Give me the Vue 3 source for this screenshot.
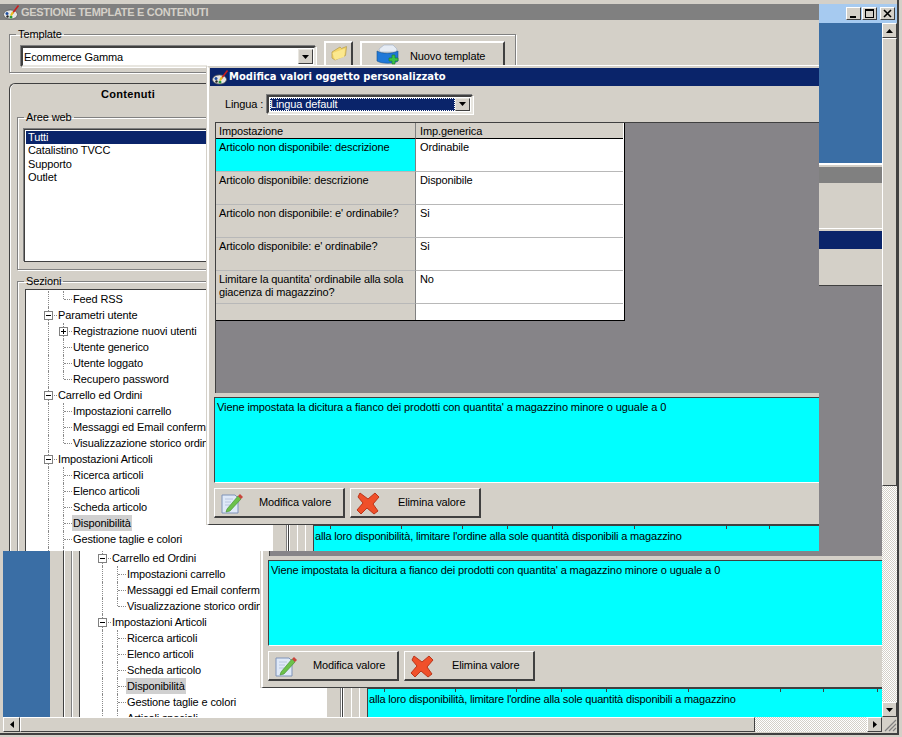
<script setup>
const scenes = [
  { id: 'ghost', x: 47, y: 163 },
  { id: 'top', x: -4, y: 0 }
]
const areas = ['Tutti', 'Catalistino TVCC', 'Supporto', 'Outlet']
const tree = [
  { t: 'Feed RSS', l: 3, last: true },
  { t: 'Parametri utente', l: 2, box: '-' },
  { t: 'Registrazione nuovi utenti', l: 3, box: '+' },
  { t: 'Utente generico', l: 3 },
  { t: 'Utente loggato', l: 3 },
  { t: 'Recupero password', l: 3, last: true },
  { t: 'Carrello ed Ordini', l: 2, box: '-' },
  { t: 'Impostazioni carrello', l: 3 },
  { t: 'Messaggi ed Email conferma ordine', l: 3 },
  { t: 'Visualizzazione storico ordini', l: 3, last: true },
  { t: 'Impostazioni Articoli', l: 2, box: '-' },
  { t: 'Ricerca articoli', l: 3 },
  { t: 'Elenco articoli', l: 3 },
  { t: 'Scheda articolo', l: 3 },
  { t: 'Disponibilità', l: 3, sel: true },
  { t: 'Gestione taglie e colori', l: 3 },
  { t: 'Articoli speciali', l: 3 }
]
const rows = [
  { a: 'Articolo non disponibile: descrizione', b: 'Ordinabile', sel: true },
  { a: 'Articolo disponibile: descrizione', b: 'Disponibile' },
  { a: 'Articolo non disponibile: e\' ordinabile?', b: 'Si' },
  { a: 'Articolo disponibile: e\' ordinabile?', b: 'Si' },
  { a: 'Limitare la quantita\' ordinabile alla sola giacenza di magazzino?', b: 'No' },
  { a: '', b: '', short: true }
]
const ticks = [16, 87, 148, 193, 238, 320, 412, 455, 509]
const memo = "Viene impostata la dicitura a fianco dei prodotti con quantita' a magazzino minore o uguale a 0"
const strip = "alla loro disponibilità, limitare l'ordine alla sole quantità disponibili a magazzino"
</script>

<template>
  <div class="app">
    <div class="capbar">
      <div class="capbtns">
        <span class="capbtn"><i class="min"></i></span>
        <span class="capbtn"><i class="max"></i></span>
        <span class="capbtn close">
          <svg width="9" height="9" viewBox="0 0 9 9"><path d="M1 1l7 7M8 1l-7 7" stroke="#000" stroke-width="1.6" fill="none"/></svg>
        </span>
      </div>
    </div>

    <div class="middle">
      <div class="viewport">
        <template v-for="s in scenes" :key="s.id">
          <div :class="s.id === 'top' ? 'clip-top' : 'clip-ghost'">
            <div class="scene" :style="{ left: s.x + 'px', top: s.y + 'px' }">
              <div class="wintitle">
                <svg class="appicon" width="17" height="15" viewBox="0 0 17 15">
                  <ellipse cx="7.5" cy="9.5" rx="7" ry="4.6" fill="#e6e6e6" stroke="#5a5a5a" stroke-width=".8"/>
                  <circle cx="4" cy="8.5" r="1.5" fill="#1f4fa0"/><circle cx="8" cy="12" r="1.5" fill="#2f9a3a"/><circle cx="4.5" cy="11.5" r="1.2" fill="#222"/>
                  <path d="M15.5.5L9 9" stroke="#c81e1e" stroke-width="1.6"/><path d="M10 7l-2 3.5" stroke="#e8c020" stroke-width="2"/>
                </svg>
                <span>GESTIONE TEMPLATE E CONTENUTI</span>
              </div>

              <fieldset class="group tplgroup">
                <legend>Template</legend>
                <div class="tplrow">
                  <div class="combo tplcombo">
                    <span class="combotext">Ecommerce Gamma</span>
                    <span class="arrowbtn"><svg width="7" height="4" viewBox="0 0 7 4"><path d="M0 0h7L3.5 4z"/></svg></span>
                  </div>
                  <div class="tbtn folderbtn">
                    <svg width="18" height="16" viewBox="0 0 18 16">
                      <path d="M2 7l8-5 1.500 1.500 5-2-1 9L5 15 2 13z" fill="#f5d76a" stroke="#b9a050" stroke-width=".8"/>
                      <path d="M2.500 8L14 4l1 .5-1 7.500-9 3z" fill="#fbe88e"/>
                    </svg>
                  </div>
                  <div class="tbtn newbtn">
                    <svg width="25" height="23" viewBox="0 0 25 23">
                      <path d="M4 6l5-4 9 0 4 4-1 3H5z" fill="#e6ecf4" stroke="#9fb0c8" stroke-width=".6"/>
                      <path d="M2 8c5 3 15 3 21 0v10c-4 3-16 3-21 0z" fill="#1f78d8" stroke="#14508f" stroke-width=".6"/>
                      <path d="M16 13h3v-3h3v3h3v3h-3v3h-3v-3h-3z" transform="translate(-2 2)" fill="#39c24a" stroke="#1c7a2a" stroke-width=".6"/>
                    </svg>
                    <span>Nuovo template</span>
                  </div>
                </div>
              </fieldset>

              <div class="tabpanel">
                <div class="leftcol">
                  <div class="tabcap">Contenuti</div>
                  <fieldset class="group areegroup">
                    <legend>Aree web</legend>
                    <ul class="listbox">
                      <li v-for="(a, i) in areas" :key="a" :class="{ active: i === 0 }">{{ a }}</li>
                    </ul>
                  </fieldset>
                  <fieldset class="group sezgroup">
                    <legend>Sezioni</legend>
                    <div class="tree">
                      <div v-for="r in tree" :key="r.t" class="node">
                        <span class="cell first" :class="{ conn: r.l === 2, narrow: r.l === 2 }">
                          <b v-if="r.l === 2" class="box"><i></i></b>
                        </span>
                        <span v-if="r.l === 3" class="cell second conn" :class="{ last: r.last }">
                          <b v-if="r.box" class="box"><i></i><i v-if="r.box === '+'" class="v"></i></b>
                        </span>
                        <span class="label" :class="{ sel: r.sel }">{{ r.t }}</span>
                      </div>
                    </div>
                  </fieldset>
                </div>
                <div class="rightcol">
                  <div class="rail"><i></i><i></i><i></i></div>
                  <div class="cyanstrip">
                    <em v-for="t in ticks" :key="t" :style="{ left: t + 'px' }"></em>
                    <span>{{ strip }}</span>
                  </div>
                </div>
              </div>

              <div class="modal">
                <div class="modtitle">
                  <svg class="appicon" width="17" height="15" viewBox="0 0 17 15">
                    <ellipse cx="7.500" cy="9.500" rx="7" ry="4.600" fill="#e6e6e6" stroke="#5a5a5a" stroke-width=".8"/>
                    <circle cx="4" cy="8.500" r="1.500" fill="#1f4fa0"/><circle cx="8" cy="12" r="1.500" fill="#2f9a3a"/><circle cx="4.500" cy="11.500" r="1.200" fill="#222"/>
                    <path d="M15.500.5L9 9" stroke="#c81e1e" stroke-width="1.600"/><path d="M10 7l-2 3.500" stroke="#e8c020" stroke-width="2"/>
                  </svg>
                  <span>Modifica valori oggetto personalizzato</span>
                </div>
                <div class="linguarow">
                  <span class="lingualabel">Lingua :</span>
                  <div class="combo linguacombo">
                    <span class="combotext focus"><span>Lingua default</span></span>
                    <span class="arrowbtn"><svg width="7" height="4" viewBox="0 0 7 4"><path d="M0 0h7L3.500 4z"/></svg></span>
                  </div>
                </div>
                <div class="gridarea">
                  <div class="tbl">
                    <div class="th">Impostazione</div>
                    <div class="th">Imp.generica</div>
                    <template v-for="(r, i) in rows" :key="i">
                      <div class="td ca" :class="{ cy: r.sel, short: r.short }">{{ r.a }}</div>
                      <div class="td cb" :class="{ short: r.short }">{{ r.b }}</div>
                    </template>
                  </div>
                </div>
                <div class="memo">{{ memo }}</div>
                <div class="btnrow">
                  <div class="btn">
                    <svg class="bico" width="24" height="24" viewBox="0 0 24 24">
                      <path d="M2 4h13l3 3v15H2z" fill="#dfe9f8" stroke="#7f93b8"/>
                      <path d="M5 8h8M5 11h6M5 14h5" stroke="#b8c6de"/>
                      <path d="M7 18l11-13 3 3L10 20l-4 1z" fill="#6cc24a" stroke="#3e8a2c" stroke-width=".6"/>
                      <path d="M18 5l2-2 3 3-2 2z" fill="#c8453a"/>
                    </svg>
                    <span class="btxt mod">Modifica valore</span>
                  </div>
                  <div class="btn">
                    <svg class="bico" width="24" height="24" viewBox="0 0 24 24">
                      <path d="M4 2l8 6 7-6 4 4-6 7 5 7-4 3-7-6-6 6-4-4 6-7-5-6z" fill="#f0502a" stroke="#b9351a" stroke-linejoin="round"/>
                    </svg>
                    <span class="btxt del">Elimina valore</span>
                  </div>
                </div>
              </div>
            </div>
          </div>
        </template>
      </div>

      <div class="vscroll">
        <span class="sbtn"><svg width="7" height="4" viewBox="0 0 7 4"><path d="M3.500 0L7 4H0z"/></svg></span>
        <div class="vthumb"></div>
        <div class="dither grow"></div>
        <span class="sbtn"><svg width="7" height="4" viewBox="0 0 7 4"><path d="M0 0h7L3.500 4z"/></svg></span>
      </div>
    </div>

    <div class="hrow">
      <span class="sbtn hl"><svg width="4" height="7" viewBox="0 0 4 7"><path d="M4 0v7L0 3.500z"/></svg></span>
      <div class="hthumb"></div>
      <div class="dither grow"></div>
      <span class="sbtn"><svg width="4" height="7" viewBox="0 0 4 7"><path d="M0 0v7l4-3.500z"/></svg></span>
      <span class="grip">
        <svg width="15" height="15" viewBox="0 0 15 15"><path d="M14 3L3 14M14 7l-7 7M14 11l-3 3" stroke="#808080" stroke-width="1.200"/></svg>
      </span>
    </div>
  </div>
</template>

<style>
html, body { margin: 0; background: #d4d0c8; }
</style>

<style scoped>
.app {
  position: relative;
  width: 902px;
  height: 737px;
  overflow: hidden;
  background: #d4d0c8;
  font: 11px/13px "Liberation Sans", Arial, sans-serif;
  letter-spacing: -0.12px;
  color: #000;
  box-sizing: border-box;
}
.capbar {
  height: 19px;
  margin: 4px 5px 0 3px;
  background: #a6caf0;
  display: flex;
  justify-content: flex-end;
  align-items: center;
  padding-right: 2px;
}
.capbtns { display: flex; gap: 1px; }
.capbtn {
  width: 15px; height: 13px;
  box-sizing: border-box;
  background: #d4d0c8;
  border: 1px solid; border-color: #fff #404040 #404040 #fff;
  display: flex; align-items: center; justify-content: center;
}
.capbtn.close { margin-left: 2px; }
.capbtn .min { width: 6px; height: 2px; background: #000; margin-top: 6px; margin-right: 2px; }
.capbtn .max { width: 9px; height: 9px; box-sizing: border-box; border: 1px solid #000; border-top-width: 2px; }
.middle { display: flex; height: 694px; margin-left: 3px; }
.viewport { width: 879px; height: 694px; background: #3a6ea5; position: relative; }
.clip-ghost { position: absolute; left: 0; top: -19px; width: 879px; height: 713px; overflow: hidden; isolation: isolate; }
.clip-top { position: absolute; left: -3px; top: -19px; width: 819px; height: 547px; overflow: hidden; isolation: isolate; }
.scene {
  position: absolute;
  width: 1000px;
  height: 900px;
  background: #d4d0c8;
  padding-left: 4px;
  box-sizing: border-box;
}
.clip-ghost .scene { box-shadow: 0 -2px 0 #d4d0c8, 0 -4px 0 #fff; }
.scene .wintitle {
  height: 16px;
  background: #808080;
  color: #d4d0c8;
  font-weight: bold;
  display: flex;
  align-items: center;
  padding-left: 3px;
  letter-spacing: -0.3px;
}
.appicon { flex: none; margin-right: 1px; }
.group {
  margin: 0;
  padding: 0;
  min-width: 0;
  border: 1px solid #808080;
  box-shadow: 1px 1px 0 #fff, inset 1px 1px 0 #fff;
  box-sizing: border-box;
}
.group legend { padding: 0 2px; margin-left: 6px; line-height: 13px; }
.tplgroup { margin: 8px 0 0 9px; width: 507px; height: 45px; }
.tplrow { display: flex; align-items: flex-start; padding-left: 11px; margin-top: 0; }
.combo {
  display: flex;
  box-sizing: border-box;
  background: #fff;
  border: 2px solid; border-color: #404040 #e8e6e0 #e8e6e0 #404040;
  box-shadow: -1px -1px 0 #808080, 1px 1px 0 #fff;
  padding: 1px;
}
.combotext { flex: 1; line-height: 15px; padding-left: 0; }
.tplcombo { width: 295px; height: 21px; margin-top: 5px; }
.tplcombo .combotext { line-height: 15px; padding-top: 1px; }
.arrowbtn {
  width: 15px;
  box-sizing: border-box;
  background: #d4d0c8;
  border: 1px solid; border-color: #e8e6e0 #404040 #404040 #e8e6e0;
  display: flex; align-items: center; justify-content: center;
}
.tbtn {
  box-sizing: border-box;
  height: 32px;
  border-top: 2px solid #fff;
  border-left: 2px solid #fff;
  border-right: 2px solid #404040;
  display: flex; align-items: flex-start;
}
.folderbtn { width: 29px; margin-left: 8px; padding: 2px 0 0 4px; }
.newbtn { width: 145px; margin-left: 7px; padding-left: 13px; }
.newbtn span { margin: 7px 0 0 10px; }
.tabpanel { display: flex; margin-top: 10px; height: 700px; margin-left: 9px; }
.leftcol {
  width: 279px;
  flex: none;
  border-left: 1px solid #404040;
  box-shadow: inset 1px 0 0 #fff;
  box-sizing: border-box;
  border-top-left-radius: 6px;
  border-top: 1px solid #404040;
}
.tabcap { width: 236px; text-align: center; font-weight: bold; height: 20px; line-height: 20px; letter-spacing: .3px; }
.areegroup { margin: 7px 0 0 7px; width: 270px; height: 159px; }
.listbox {
  list-style: none; margin: 5px 0 0 6px; padding: 1px 0 0 1px;
  width: 246px; height: 133px;
  box-sizing: border-box;
  background: #fff;
  border: 1px solid #404040;
  box-shadow: -1px -1px 0 #808080;
}
.listbox li { height: 13.33px; line-height: 12px; padding-left: 2px; }
.listbox li.active { background: #0a246a; color: #fff; }
.sezgroup { margin: 5px 0 0 7px; width: 270px; height: 600px; }
.tree {
  margin: 1px 0 0 7px;
  width: 248px;
  height: 600px;
  padding: 1px 0 0 22px;
  box-sizing: border-box;
  background: #fff;
  border-left: 1px solid #404040;
  border-top: 1px solid #404040;
  overflow: hidden;
}
.node { display: flex; height: 16px; align-items: stretch; }
.cell { position: relative; width: 15px; flex: none; border-left: 1px dotted #8a8a8a; box-sizing: border-box; }
.cell.narrow { width: 9px; }
.cell.second { width: 9px; }
.cell.last { border-left-color: transparent; }
.cell.last::before { content: ""; position: absolute; left: -1px; top: 0; height: 8px; border-left: 1px dotted #8a8a8a; }
.cell.conn::after { content: ""; position: absolute; left: 0; right: 0; top: 8px; border-top: 1px dotted #8a8a8a; }
.box {
  position: absolute; left: -5px; top: 4px; z-index: 1;
  width: 9px; height: 9px; box-sizing: border-box;
  border: 1px solid #808080; background: #fff;
}
.box i { position: absolute; left: 1px; top: 3px; width: 5px; height: 1px; background: #000; }
.box i.v { left: 3px; top: 1px; width: 1px; height: 5px; }
.label { line-height: 16px; padding: 0 1px; white-space: nowrap; }
.label.sel { background: #d0d0d0; }
.rightcol { flex: 1; display: flex; margin-top: 442px; border-left: 1px solid #404040; }
.rail { width: 24px; flex: none; display: flex; border-right: 1px solid #404040; }
.rail i { width: 8px; box-sizing: border-box; border-left: 1px solid #fff; }
.cyanstrip { flex: 1; background: #00ffff; position: relative; border-top: 1px solid #404040; padding: 4px 0 0 1px; height: 300px; white-space: nowrap; letter-spacing: -0.17px; }
.cyanstrip em { position: absolute; top: 0; width: 1px; height: 3px; background: #404040; }
.modal {
  position: absolute;
  z-index: 2;
  left: 211px;
  top: 62px;
  width: 780px;
  height: 459px;
  box-sizing: border-box;
  background: #d4d0c8;
  border-top: 2px solid #d4d0c8;
  border-left: 2px solid #fff;
  border-bottom: 1px solid #404040;
  box-shadow: -1px 0 0 #d4d0c8, 0 -1px 0 #fff;
  padding-left: 1px;
}
.modtitle {
  height: 18px;
  background: #0a246a;
  color: #fff;
  font: bold 10px/18px "DejaVu Sans", sans-serif;
  letter-spacing: 0;
  display: flex;
  align-items: center;
  padding-left: 2px;
}
.modtitle .appicon { margin-right: 0; }
.linguarow { display: flex; align-items: center; padding: 8px 0 0 15px; height: 20px; }
.lingualabel { width: 42px; }
.linguacombo { width: 206px; height: 19px; }
.focus { background: #0a246a; color: #fff; outline: 1px dotted #fff; outline-offset: -1px; line-height: 13px; padding-left: 0; }
.gridarea {
  margin: 8px 0 0 5px;
  height: 270px;
  background: #868488;
  border-left: 1px solid #404040;
  border-top: 1px solid #404040;
}
.tbl {
  width: 408px;
  display: grid;
  grid-template-columns: 200px 207px;
  background: #fff;
  border-right: 1px solid #000;
  border-bottom: 1px solid #000;
}
.th { height: 14px; background: #d4d0c8; border-bottom: 1px solid #000; padding: 1px 4px 0; line-height: 14px; }
.th:first-child { border-right: 1px solid #808080; padding-left: 3px; }
.td { height: 33px; box-sizing: border-box; border-bottom: 1px solid #b8b8b8; padding: 2px 4px; line-height: 13px; }
.td.ca { background: #d4d0c8; border-right: 1px solid #808080; padding-left: 3px; }
.td.cb { background: #fff; }
.td.ca.cy { background: #00ffff; }
.td.short { height: 16px; border-bottom: 0; }
.memo {
  margin: 4px 0 0 4px;
  height: 86px;
  box-sizing: border-box;
  background: #00ffff;
  border-top: 1px solid #404040;
  border-left: 1px solid #404040;
  border-bottom: 1px solid #fff;
  padding: 3px 2px;
  letter-spacing: -0.1px;
}
.btnrow { display: flex; gap: 5px; margin: 5px 0 0 4px; }
.btn {
  width: 131px; height: 30px;
  box-sizing: border-box;
  background: #d4d0c8;
  border: 1px solid; border-color: #fff #404040 #404040 #fff;
  border-width: 1px 2px 2px 1px;
  display: flex; align-items: center;
  padding-left: 5px;
}
.bico { flex: none; }
.btxt.mod { margin-left: 15px; }
.btxt.del { margin-left: 18px; }
.vscroll { width: 15px; display: flex; flex-direction: column; }
.sbtn {
  flex: none;
  width: 15px; height: 15px;
  box-sizing: border-box;
  background: #d4d0c8;
  border: 1px solid; border-color: #fff #404040 #404040 #fff;
  display: flex; align-items: center; justify-content: center;
}
.vthumb {
  height: 448px;
  flex: none;
  box-sizing: border-box;
  background: #d4d0c8;
  border: 1px solid; border-color: #fff #404040 #404040 #fff;
}
.dither {
  background: repeating-conic-gradient(#fff 0 25%, #d4d0c8 0 50%) 0 0 / 2px 2px;
}
.grow { flex: 1; }
.hrow { display: flex; height: 15px; margin: 0 5px 0 3px; }
.hl { width: 17px; }
.hthumb {
  width: 735px;
  flex: none;
  box-sizing: border-box;
  background: #d4d0c8;
  border: 1px solid; border-color: #fff #404040 #404040 #fff;
}
.grip { width: 15px; flex: none; }
.app::after {
  content: "";
  position: absolute;
  left: 0; right: 3px; bottom: 2px; top: 0;
  border-right: 2px solid #404040;
  border-bottom: 2px solid #404040;
  pointer-events: none;
}
</style>
